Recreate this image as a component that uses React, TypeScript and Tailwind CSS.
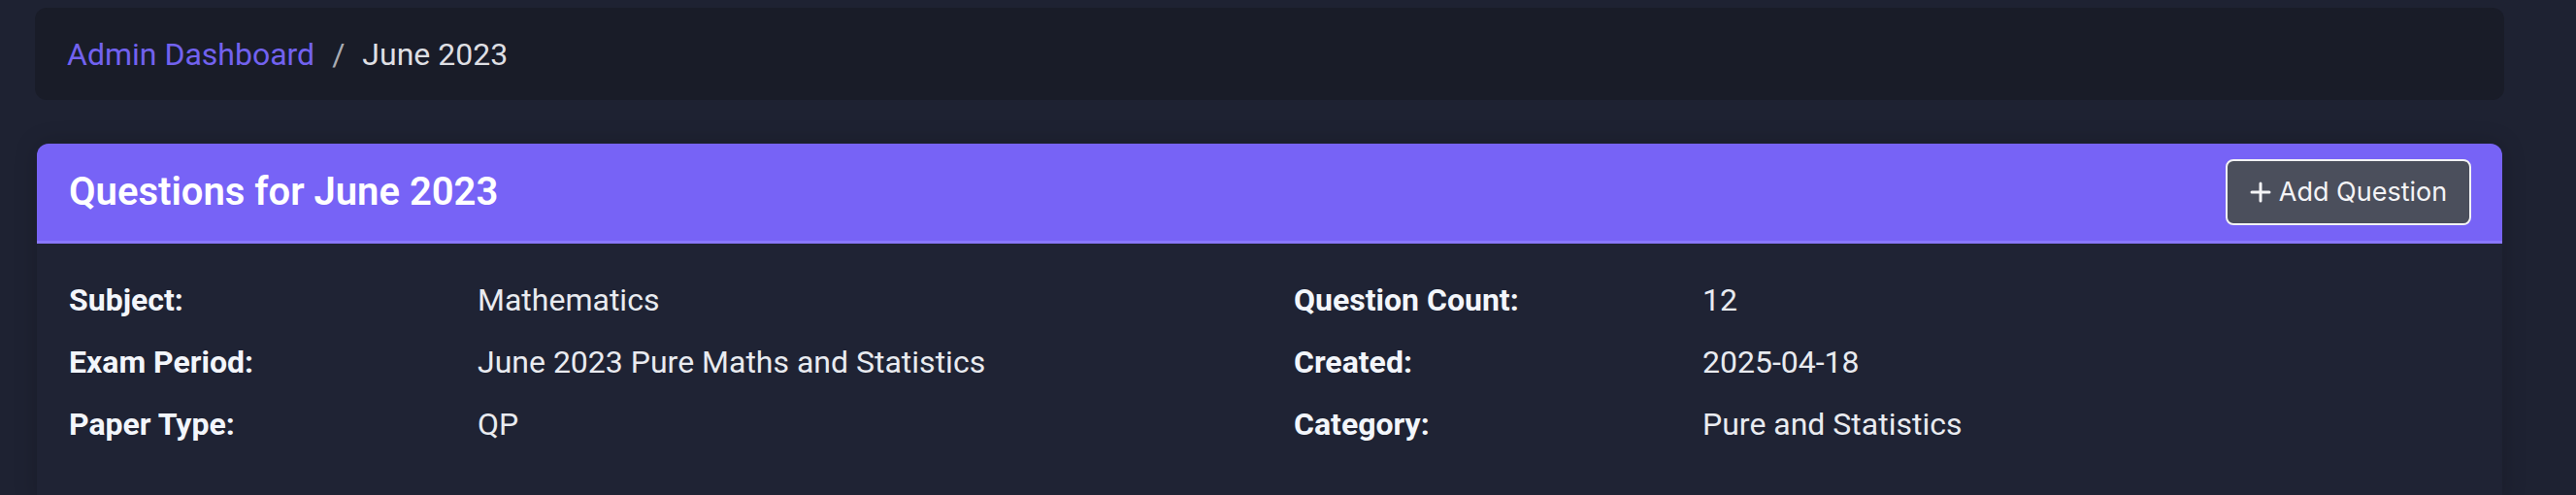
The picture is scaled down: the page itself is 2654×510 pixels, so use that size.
import React from "react";

const rowsLeft = [
  ["Subject:", "Mathematics"],
  ["Exam Period:", "June 2023 Pure Maths and Statistics"],
  ["Paper Type:", "QP"],
];
const rowsRight = [
  ["Question Count:", "12"],
  ["Created:", "2025-04-18"],
  ["Category:", "Pure and Statistics"],
];

function InfoColumn({ rows }: { rows: string[][] }) {
  return (
    <div className="flex flex-col">
      {rows.map(([label, value]) => (
        <div key={label} className="grid grid-cols-[421px_1fr] mb-[16px] leading-[48px]">
          <span className="font-bold text-[#f3f6fb]">{label}</span>
          <span className="text-[#e9ebf0]">{value}</span>
        </div>
      ))}
    </div>
  );
}

export default function App() {
  return (
    <div
      className="min-h-screen bg-[#1e2232] pl-[36px] pr-[74px] pt-[8px] text-[32px]"
      style={{ fontFamily: "Roboto, 'Noto Sans', sans-serif" }}
    >
      <nav className="h-[95px] rounded-[12px] bg-[#191c28] flex items-center pl-[33px] gap-[18px]">
        <a className="text-[#7262ef]">Admin Dashboard</a>
        <span className="text-[#a9abb2]">/</span>
        <span className="text-[#dedfe3]">June 2023</span>
      </nav>

      <div className="mt-[45px] mr-[2px] ml-[2px] rounded-t-[12px] bg-[#1f2334] shadow-[0_0_24px_rgba(0,0,0,0.18)] pb-[40px]">
        <div className="h-[103px] rounded-t-[12px] bg-[#7763f6] border-b-[3px] border-[#8a78ff] flex items-center justify-between pl-[33px] pr-[32px]">
          <h2 className="text-[40px] font-semibold text-white">Questions for June 2023</h2>
          <button
            className="h-[68px] w-[253px] rounded-[8px] border-2 border-[#f2f2f4] bg-[#4b4f5c] text-[#f4f4f6] flex items-center justify-center gap-[8px] text-[27px]"
            style={{ fontFamily: "Inter, sans-serif" }}
          >
            <svg width="22" height="22" viewBox="0 0 22 22" fill="none" stroke="currentColor" strokeWidth="3" strokeLinecap="round">
              <line x1="11" y1="2" x2="11" y2="20" />
              <line x1="2" y1="11" x2="20" y2="11" />
            </svg>
            <span>Add Question</span>
          </button>
        </div>
        <div className="grid grid-cols-2 gap-x-[50px] px-[33px] pt-[34px]">
          <InfoColumn rows={rowsLeft} />
          <InfoColumn rows={rowsRight} />
        </div>
      </div>
    </div>
  );
}
